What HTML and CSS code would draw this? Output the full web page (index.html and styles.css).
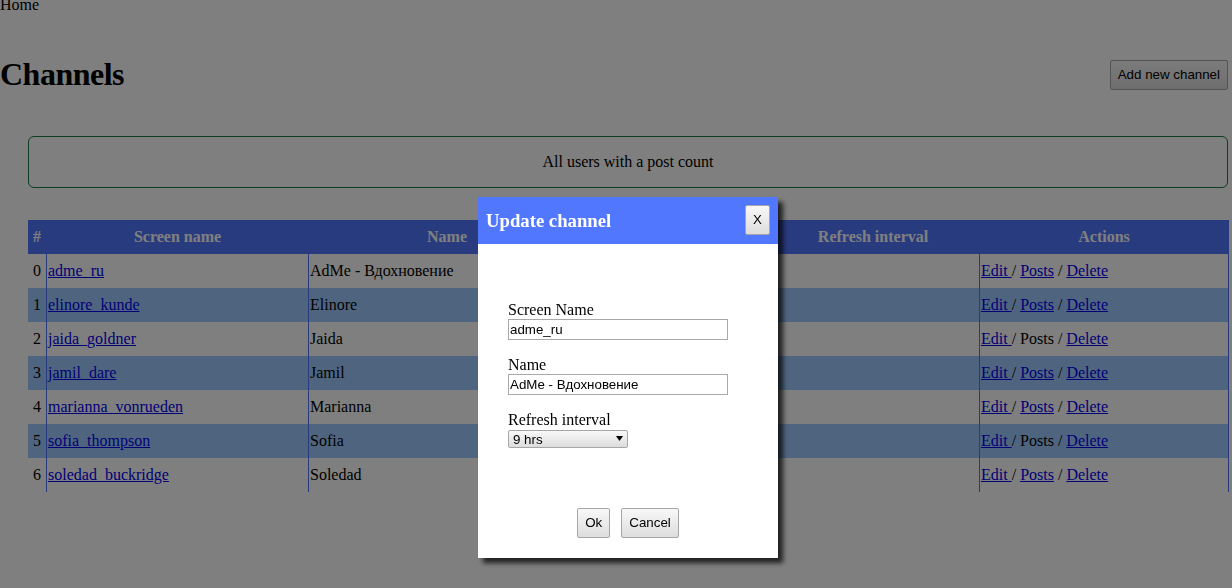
FILE: index.html
```html
<!DOCTYPE html>
<html lang="en">
<head>
<meta charset="utf-8">
<title>Channels</title>
<link rel="stylesheet" href="styles.css">
</head>
<body>
<div class="page">
  <div class="crumbs">Home</div>
  <div class="title-row">
    <h1 class="title">Channels</h1>
    <button class="btn btn-add" type="button">Add new channel</button>
  </div>
  <div class="info">All users with a post count</div>
  <table class="channels">
    <thead>
      <tr>
        <th class="c-num">#</th>
        <th class="c-screen">Screen name</th>
        <th class="c-name">Name</th>
        <th class="c-count">Post count</th>
        <th class="c-refresh">Refresh interval</th>
        <th class="c-actions">Actions</th>
      </tr>
    </thead>
    <tbody>
      <tr>
        <td class="num">0</td>
        <td><a class="lnk" href="#">adme_ru</a></td>
        <td>AdMe - Вдохновение</td>
        <td></td>
        <td></td>
        <td><a class="lnk" href="#">Edit </a>/ <a class="lnk" href="#">Posts</a> / <a class="lnk" href="#">Delete</a></td>
      </tr>
      <tr>
        <td class="num">1</td>
        <td><a class="lnk" href="#">elinore_kunde</a></td>
        <td>Elinore</td>
        <td></td>
        <td></td>
        <td><a class="lnk" href="#">Edit </a>/ <a class="lnk" href="#">Posts</a> / <a class="lnk" href="#">Delete</a></td>
      </tr>
      <tr>
        <td class="num">2</td>
        <td><a class="lnk" href="#">jaida_goldner</a></td>
        <td>Jaida</td>
        <td></td>
        <td></td>
        <td><a class="lnk" href="#">Edit </a>/ Posts / <a class="lnk" href="#">Delete</a></td>
      </tr>
      <tr>
        <td class="num">3</td>
        <td><a class="lnk" href="#">jamil_dare</a></td>
        <td>Jamil</td>
        <td></td>
        <td></td>
        <td><a class="lnk" href="#">Edit </a>/ <a class="lnk" href="#">Posts</a> / <a class="lnk" href="#">Delete</a></td>
      </tr>
      <tr>
        <td class="num">4</td>
        <td><a class="lnk" href="#">marianna_vonrueden</a></td>
        <td>Marianna</td>
        <td></td>
        <td></td>
        <td><a class="lnk" href="#">Edit </a>/ <a class="lnk" href="#">Posts</a> / <a class="lnk" href="#">Delete</a></td>
      </tr>
      <tr>
        <td class="num">5</td>
        <td><a class="lnk" href="#">sofia_thompson</a></td>
        <td>Sofia</td>
        <td></td>
        <td></td>
        <td><a class="lnk" href="#">Edit </a>/ Posts / <a class="lnk" href="#">Delete</a></td>
      </tr>
      <tr>
        <td class="num">6</td>
        <td><a class="lnk" href="#">soledad_buckridge</a></td>
        <td>Soledad</td>
        <td></td>
        <td></td>
        <td><a class="lnk" href="#">Edit </a>/ <a class="lnk" href="#">Posts</a> / <a class="lnk" href="#">Delete</a></td>
      </tr>
    </tbody>
  </table>
</div>

<div class="overlay"></div>

<div class="modal">
  <div class="modal-head">
    <h3 class="modal-title">Update channel</h3>
    <button class="btn btn-close" type="button">X</button>
  </div>
  <div class="modal-body">
    <div class="field">
      <label class="lbl">Screen Name</label>
      <input class="inp" type="text" value="adme_ru">
    </div>
    <div class="field">
      <label class="lbl">Name</label>
      <input class="inp" type="text" value="AdMe - Вдохновение">
    </div>
    <div class="field">
      <label class="lbl">Refresh interval</label>
      <div class="sel-wrap">
        <select class="sel">
          <option>9 hrs</option>
        </select>
        <svg class="sel-arrow" width="7" height="5" viewBox="0 0 7 5"><path d="M0 0H7L3.5 5Z" fill="#000"/></svg>
      </div>
    </div>
    <div class="modal-foot">
      <button class="btn" type="button">Ok</button>
      <button class="btn" type="button">Cancel</button>
    </div>
  </div>
</div>
</body>
</html>
```

FILE: styles.css
```css
html, body {
  margin: 0;
  padding: 0;
  background: #fff;
  color: #000;
  font-family: "Liberation Serif", "Times New Roman", serif;
  font-size: 16px;
}

body {
  height: 588px;
  overflow: hidden;
}

.page {
  width: 1229px;
}

.crumbs {
  margin-top: -4px;
  line-height: 18px;
  height: 18px;
}

.title-row {
  display: flex;
  justify-content: space-between;
  align-items: flex-start;
  margin-top: 42px;
}

.title {
  margin: 0;
  font-size: 32px;
  font-weight: bold;
  line-height: 37px;
  letter-spacing: -0.5px;
}

.btn {
  font-family: "Liberation Sans", Arial, sans-serif;
  font-size: 13.33px;
  line-height: 15px;
  color: #000;
  padding: 6px 7px 7px 7px;
  border: 1px solid #a6a6a6;
  border-radius: 2px;
  background: linear-gradient(#f8f8f8, #dddddd);
  margin: 0;
}

.btn-add {
  margin-top: 4px;
  margin-right: 1px;
}

.info {
  margin: 43px 0 0 28px;
  width: 1200px;
  box-sizing: border-box;
  border: 1px solid #1a7a45;
  border-radius: 6px;
  padding: 16px;
  line-height: 18px;
  text-align: center;
}

.channels {
  margin: 32px 0 0 28px;
  width: 1201px;
  table-layout: fixed;
  border-collapse: separate;
  border-spacing: 0;
}

.channels th {
  box-sizing: border-box;
  background: #5277ff;
  color: #fff;
  font-weight: bold;
  padding: 8px 1px;
  line-height: 18px;
  border-right: 1px solid transparent;
  text-align: center;
}

.channels td {
  padding: 8px 1px;
  line-height: 18px;
  border-right: 1px solid #5277ff;
  white-space: nowrap;
  text-align: left;
}

.channels tbody tr:nth-child(even) td {
  background: #9fcbff;
}

.channels td.num {
  text-align: center;
}

.c-num { width: 19px; }
.c-screen { width: 262px; }
.c-name { width: 277px; }
.c-count { width: 181px; }
.c-refresh { width: 213px; }
.c-actions { width: 249px; }

.lnk {
  color: #0000ee;
  text-decoration: underline;
}

.overlay {
  position: fixed;
  inset: 0;
  background: rgba(0, 0, 0, 0.5);
}

.modal {
  position: fixed;
  left: 478px;
  top: 197px;
  width: 300px;
  background: #fff;
  box-shadow: 5px 5px 5px rgba(0, 0, 0, 0.75);
}

.modal-head {
  height: 47px;
  box-sizing: border-box;
  background: #5277ff;
  display: flex;
  align-items: flex-start;
  justify-content: space-between;
  padding: 0 8px;
}

.modal-title {
  margin: 13px 0 0 0;
  color: #fff;
  font-size: 18.72px;
  font-weight: bold;
  line-height: 22px;
}

.btn-close {
  margin-top: 8px;
}

.modal-body {
  padding: 57px 30px 20px 30px;
}

.field {
  margin-bottom: 16px;
}

.lbl {
  display: block;
  line-height: 18px;
}

.inp {
  display: block;
  width: 220px;
  height: 21px;
  box-sizing: border-box;
  margin: 0;
  border: 1px solid #a9a9a9;
  padding: 1px 1px;
  font-family: "Liberation Sans", Arial, sans-serif;
  font-size: 13.33px;
  color: #000;
  background: #fff;
}

.sel-wrap {
  position: relative;
  width: 120px;
  height: 18px;
  margin-top: 1px;
}

.sel {
  appearance: none;
  -webkit-appearance: none;
  display: block;
  width: 120px;
  height: 18px;
  box-sizing: border-box;
  margin: 0;
  padding: 0 4px;
  border: 1px solid #a6a6a6;
  border-radius: 2px;
  background: linear-gradient(#f8f8f8, #dddddd);
  font-family: "Liberation Sans", Arial, sans-serif;
  font-size: 13.33px;
  color: #000;
}

.sel-arrow {
  position: absolute;
  right: 5px;
  top: 6px;
  pointer-events: none;
}

.modal-foot {
  display: flex;
  justify-content: center;
  gap: 11px;
  margin-top: 60px;
}
```
